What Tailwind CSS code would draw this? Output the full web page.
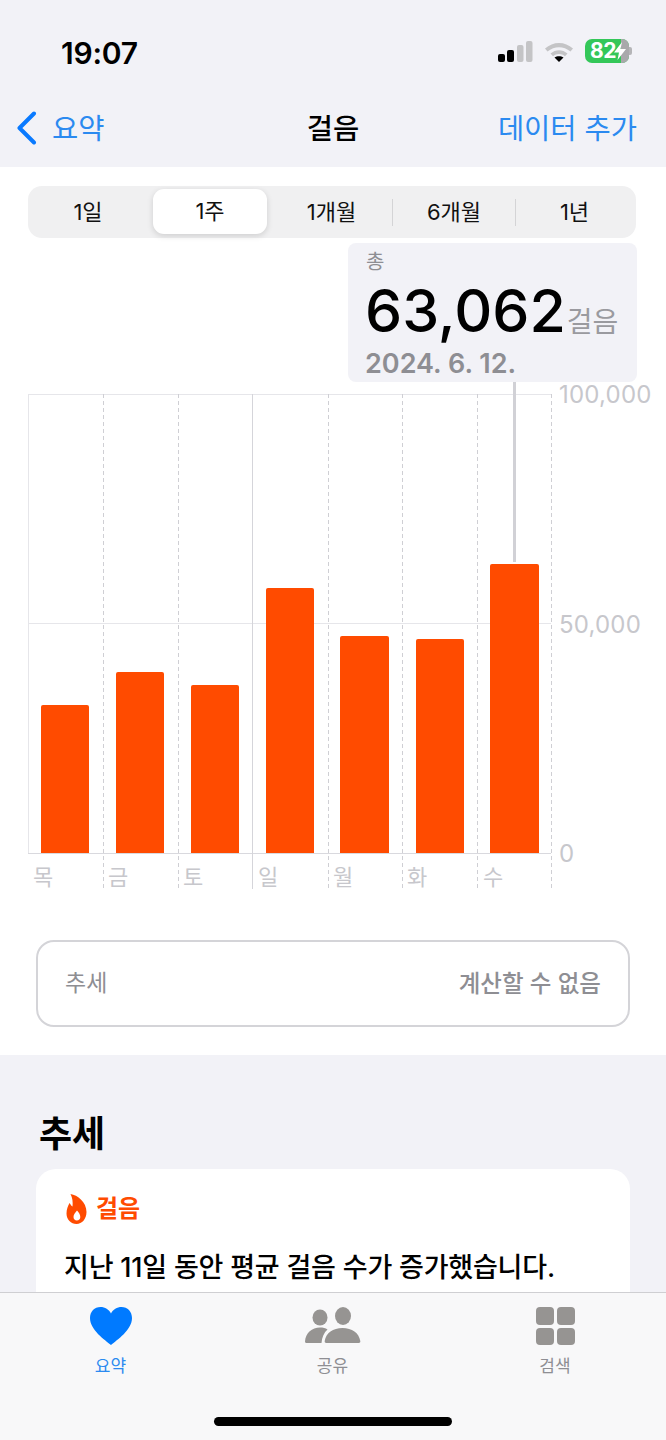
<!DOCTYPE html>
<html lang="ko">

<head>
    <meta charset="UTF-8">
    <meta name="viewport" content="width=device-width, initial-scale=1.0">
    <title>걸음</title>
    <script src="https://cdn.jsdelivr.net/npm/@tailwindcss/browser@4"></script>
</head>

<body class="bg-[#f2f2f7] font-['Inter','Noto_Sans_CJK_KR',sans-serif]">
    <div class="relative w-[666px] h-[1440px] overflow-hidden">
        <!-- Status bar -->
        <div class="h-[104px] flex items-start justify-between pt-[35px] pl-[61px] pr-[34px]">
            <span class="text-[30px] leading-[36px] font-semibold text-black tracking-[-0.2px]">19:07</span>
            <div class="flex items-center gap-[11px] h-[24px] mt-[4px]">
                <svg width="35" height="21" viewBox="0 0 35 21">
                    <rect x="0" y="13" width="7" height="8" rx="2" fill="#000" />
                    <rect x="9" y="9" width="7" height="12" rx="2" fill="#000" />
                    <rect x="19" y="4" width="6.500" height="17" rx="2" fill="#c4c4c6" />
                    <rect x="28" y="0" width="6.500" height="21" rx="2" fill="#c4c4c6" />
                </svg>
                <svg width="30" height="21" viewBox="0 0 30 21">
                    <path d="M1 7.500C9 0 21 0 29 7.500L26.500 10.500C19.500 4.800 10.500 4.800 3.500 10.500Z" fill="#c4c4c6" />
                    <path d="M6.500 12.500C11.500 8 18.500 8 23.500 12.500L21 15.200C17.500 12.300 12.500 12.300 9 15.200Z" fill="#c4c4c6" />
                    <path d="M10.500 16.500C13 14.800 17 14.800 19.500 16.500L15 21Z" fill="#000" />
                </svg>
                <div class="relative flex items-center">
                    <div class="relative w-[44px] h-[24px] rounded-[7px] overflow-hidden bg-[#34c759] flex items-center pl-[5px]">
                        <div class="absolute right-0 top-0 bottom-0 w-[8px] bg-[#a9a9ab]"></div>
                        <span class="relative text-[21px] leading-[24px] font-bold text-white tracking-[-0.5px]">82</span>
                        <svg class="absolute left-[29px] top-[3px]" width="12" height="18" viewBox="0 0 12 18">
                            <path d="M8 0L0 10.500H5L3.500 18L12 7H6.500Z" fill="#fff" />
                        </svg>
                    </div>
                    <div class="w-[3px] h-[8px] rounded-r-[2px] bg-[#b5b5b7]"></div>
                </div>
            </div>
        </div>

        <!-- Nav bar -->
        <div class="relative h-[63px] flex items-start justify-between pl-[16px] pr-[29px] pt-[2px]">
            <div class="flex items-center gap-[15px] h-[46px]">
                <svg class="-mt-[2px]" width="21" height="34" viewBox="0 0 21 34">
                    <path d="M18 2.500L3.500 17L18 31.500" fill="none" stroke="#0a7aff" stroke-width="4" stroke-linecap="round" stroke-linejoin="round" />
                </svg>
                <span class="text-[28.500px] leading-[46px] text-[#2b8af0]">요약</span>
            </div>
            <span class="absolute left-0 right-0 top-[2px] text-center text-[28.500px] leading-[46px] font-medium text-black">걸음</span>
            <span class="text-[28.500px] leading-[46px] text-[#2b8af0]">데이터 추가</span>
        </div>

        <!-- Main panel -->
        <div class="bg-white h-[888px] pt-[19px]">
            <!-- Segments -->
            <div class="mx-[28px] w-[608px] h-[52px] rounded-[14px] bg-[#f0f0f1] flex items-center px-[3px] text-[22px] text-[#111]">
                <div class="w-[122px] pr-[8px] text-center">1일</div>
                <div class="w-[114px] h-[45px] -mt-[2px] leading-[45px] text-center bg-white rounded-[11px] shadow-[0_2px_6px_rgba(0,0,0,0.14)]">1주</div>
                <div class="w-[125px] pl-[4px] text-center">1개월</div>
                <div class="w-[1px] h-[27px] bg-[#d4d4d6]"></div>
                <div class="w-[122px] text-center">6개월</div>
                <div class="w-[1px] h-[27px] bg-[#d4d4d6]"></div>
                <div class="flex-1 text-center">1년</div>
            </div>

            <!-- Chart -->
            <div class="relative h-[702px]">
                <!-- Horizontal rules -->
                <div class="absolute left-[28px] w-[523px] top-[156px] h-[1px] bg-[#e6e6ea]"></div>
                <div class="absolute left-[28px] w-[523px] top-[385px] h-[1px] bg-[#e6e6ea]"></div>
                <div class="absolute left-[28px] w-[523px] top-[615px] h-[1px] bg-[#d9d9de]"></div>

                <!-- Vertical rules -->
                <div class="absolute left-[28px] top-[156px] h-[459px] w-[1px] bg-[#e6e6ea]"></div>
                <div class="absolute left-[103px] top-[156px] h-[495px] w-[1px] bg-[repeating-linear-gradient(to_bottom,#cfcfd4_0,#cfcfd4_4px,transparent_4px,transparent_7px)]"></div>
                <div class="absolute left-[178px] top-[156px] h-[495px] w-[1px] bg-[repeating-linear-gradient(to_bottom,#cfcfd4_0,#cfcfd4_4px,transparent_4px,transparent_7px)]"></div>
                <div class="absolute left-[252px] top-[156px] h-[495px] w-[1px] bg-[#d5d5da]"></div>
                <div class="absolute left-[328px] top-[156px] h-[495px] w-[1px] bg-[repeating-linear-gradient(to_bottom,#cfcfd4_0,#cfcfd4_4px,transparent_4px,transparent_7px)]"></div>
                <div class="absolute left-[402px] top-[156px] h-[495px] w-[1px] bg-[repeating-linear-gradient(to_bottom,#cfcfd4_0,#cfcfd4_4px,transparent_4px,transparent_7px)]"></div>
                <div class="absolute left-[477px] top-[156px] h-[495px] w-[1px] bg-[repeating-linear-gradient(to_bottom,#cfcfd4_0,#cfcfd4_4px,transparent_4px,transparent_7px)]"></div>
                <div class="absolute left-[551px] top-[156px] h-[495px] w-[1px] bg-[repeating-linear-gradient(to_bottom,#cfcfd4_0,#cfcfd4_4px,transparent_4px,transparent_7px)]"></div>

                <!-- Bars -->
                <div class="absolute left-[41px] top-[156px] h-[459px] flex items-end">
                    <div class="w-[48px] h-[148px] rounded-t-[2px] bg-[#ff4b00]"></div>
                    <div class="w-[48px] h-[181px] ml-[27px] rounded-t-[2px] bg-[#ff4b00]"></div>
                    <div class="w-[48px] h-[168px] ml-[27px] rounded-t-[2px] bg-[#ff4b00]"></div>
                    <div class="w-[48px] h-[265px] ml-[27px] rounded-t-[2px] bg-[#ff4b00]"></div>
                    <div class="w-[49px] h-[217px] ml-[26px] rounded-t-[2px] bg-[#ff4b00]"></div>
                    <div class="w-[48px] h-[214px] ml-[27px] rounded-t-[2px] bg-[#ff4b00]"></div>
                    <div class="w-[49px] h-[289px] ml-[26px] rounded-t-[2px] bg-[#ff4b00]"></div>
                </div>

                <!-- Axis values -->
                <span class="absolute left-[559px] top-[142px] text-[24px] leading-[30px] tracking-[0.2px] text-[#c7c7cc]">100,000</span>
                <span class="absolute left-[559px] top-[372px] text-[24px] leading-[30px] tracking-[0.2px] text-[#c7c7cc]">50,000</span>
                <span class="absolute left-[559px] top-[601px] text-[24px] leading-[30px] text-[#c7c7cc]">0</span>

                <!-- Day labels -->
                <div class="absolute left-0 top-[624px] text-[22px] leading-[30px] text-[#c7c7cc]">
                    <span class="absolute left-[33px]">목</span>
                    <span class="absolute left-[108px]">금</span>
                    <span class="absolute left-[183px]">토</span>
                    <span class="absolute left-[258px]">일</span>
                    <span class="absolute left-[333px]">월</span>
                    <span class="absolute left-[407px]">화</span>
                    <span class="absolute left-[483px]">수</span>
                </div>

                <!-- Tooltip -->
                <div class="absolute left-[513px] top-[140px] w-[3px] h-[184px] bg-[#d1d1d6]"></div>
                <div class="absolute left-[348px] top-[5px] w-[289px] h-[139px] rounded-[8px] bg-[#f2f2f7] pl-[18px] pt-[6px]">
                    <div class="text-[20px] leading-[26px] text-[#8e8e93]">총</div>
                    <div class="flex items-baseline mt-[8px] h-[56px] -ml-[1px]">
                        <span class="text-[59px] leading-[56px] font-medium text-black">63,062</span>
                        <span class="text-[28px] leading-[56px] text-[#9a9a9f] ml-[1px]">걸음</span>
                    </div>
                    <div class="text-[27px] leading-[32px] font-semibold text-[#8e8e93] mt-[9px] -ml-[1px]">2024. 6. 12.</div>
                </div>
            </div>

            <!-- Trend box -->
            <div class="mx-[36px] h-[87px] rounded-[18px] border-2 border-[#d4d4d8] flex items-center justify-between px-[27px] text-[23px] text-[#8e8e93]">
                <span>추세</span>
                <span class="text-[23.500px] font-medium">계산할 수 없음</span>
            </div>
        </div>

        <!-- Trends section -->
        <div class="px-[36px] pt-[54px]">
            <h2 class="pl-[3px] text-[36px] leading-[50px] font-bold text-black">추세</h2>
            <div class="mt-[10px] h-[160px] rounded-t-[20px] bg-white px-[29px] pt-[24px]">
                <div class="flex items-center gap-[9px] h-[32px]">
                    <svg class="ml-[1px]" width="21" height="30" viewBox="0 0 20 30">
                        <path fill-rule="evenodd" d="M4 0C11 1 20 8 20 18C20 25 15.500 30 10 30C4.500 30 0 25.500 0 19.500C0 15 1.500 12 3 9C4 10.500 5 12 6 12.500C6.500 8 6 4 4 0ZM10.500 16.500C8.500 19 7 20.500 7 23C7 25 8.500 26.500 10.300 26.500C12.300 26.500 13.800 25 13.800 23C13.800 20.500 12.300 18.500 10.500 16.500Z" fill="#ff4b00" />
                    </svg>
                    <span class="text-[24px] leading-[32px] font-semibold text-[#ff4b00]">걸음</span>
                </div>
                <p class="mt-[25px] -ml-[1px] text-[27px] leading-[36px] font-medium text-black tracking-[-0.2px] whitespace-nowrap">지난 11일 동안 평균 걸음 수가 증가했습니다.</p>
            </div>
        </div>

        <!-- Tab bar -->
        <div class="absolute left-0 right-0 bottom-0 h-[148px] bg-[#f8f8f9] border-t border-[#cfcfd2]">
            <div class="flex pt-[14px]">
                <div class="w-[221px] flex flex-col items-center">
                    <svg width="42" height="38" viewBox="0 0 42 38">
                        <path d="M21 38C15 33 0 23 0 11C0 4.500 4.500 0 10.500 0C15 0 19 2.500 21 6.500C23 2.500 27 0 31.500 0C37.500 0 42 4.500 42 11C42 23 27 33 21 38Z" fill="#007aff" />
                    </svg>
                    <span class="mt-[10px] text-[17px] leading-[22px] text-[#2b8af0]">요약</span>
                </div>
                <div class="w-[223px] flex flex-col items-center">
                    <svg width="56" height="38" viewBox="0 0 56 38">
                        <ellipse cx="15" cy="10.500" rx="7.500" ry="8" fill="#969492" />
                        <ellipse cx="38" cy="9" rx="8" ry="9" fill="#969492" />
                        <path d="M1.500 36C0.500 36 0 35.300 0 34.500C0.500 26 7 20.500 15 20.500C18 20.500 20.500 21 22.500 22.500C19 25.500 17 30 16.500 36Z" fill="#969492" />
                        <path d="M21.500 36C20 36 19.500 35 19.700 34C21 26 28 21 37.500 21C47 21 54 26 55.300 34C55.500 35 55 36 53.500 36Z" fill="#969492" />
                    </svg>
                    <span class="mt-[10px] text-[17px] leading-[22px] text-[#8e8e93]">공유</span>
                </div>
                <div class="w-[222px] flex flex-col items-center">
                    <div class="grid grid-cols-2 gap-[3px] w-[39px] h-[38px]">
                        <div class="rounded-[4px] bg-[#969492]"></div>
                        <div class="rounded-[4px] bg-[#969492]"></div>
                        <div class="rounded-[4px] bg-[#969492]"></div>
                        <div class="rounded-[4px] bg-[#969492]"></div>
                    </div>
                    <span class="mt-[10px] text-[17px] leading-[22px] text-[#8e8e93]">검색</span>
                </div>
            </div>
            <div class="absolute left-[214px] bottom-[14px] w-[238px] h-[9px] rounded-full bg-black"></div>
        </div>
    </div>
</body>

</html>
